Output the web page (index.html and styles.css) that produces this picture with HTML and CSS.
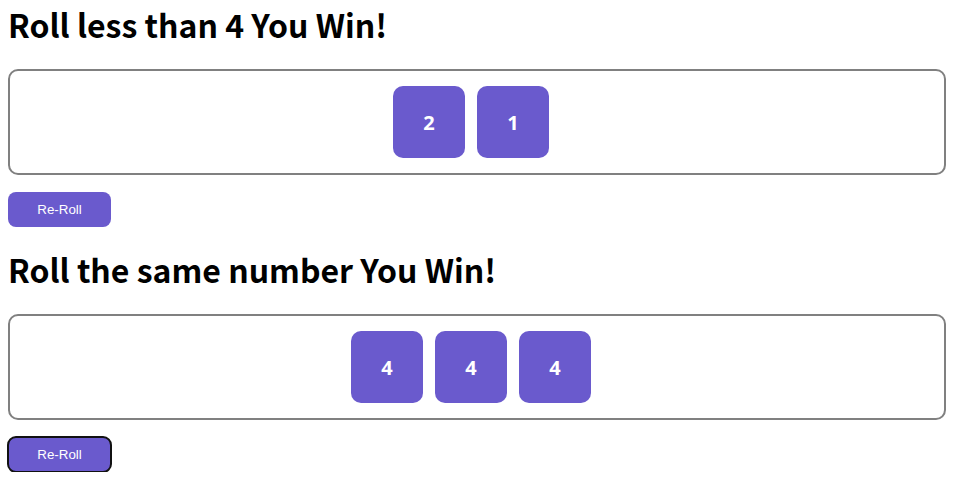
FILE: index.html
```html
<!DOCTYPE html>
<html>
<head>
<meta charset="utf-8">
<link rel="stylesheet" href="styles.css">
</head>
<body>
<section class="game">
  <h1 class="title">Roll less than 4 You Win!</h1>
  <div class="board">
    <div class="die">2</div>
    <div class="die">1</div>
  </div>
  <button class="reroll">Re-Roll</button>
</section>
<section class="game">
  <h1 class="title">Roll the same number You Win!</h1>
  <div class="board">
    <div class="die">4</div>
    <div class="die">4</div>
    <div class="die">4</div>
  </div>
  <button class="reroll focused">Re-Roll</button>
</section>
</body>
</html>
```
FILE: styles.css
```css
body {
  margin: 0;
  padding: 1px 8px 0;
  background: #fff;
  display: flex;
  flex-direction: column;
  gap: 19px;
}
.game {
  display: flex;
  flex-direction: column;
  align-items: flex-start;
}
.title {
  margin: 0 0 22px;
  font-family: "Noto Sans CJK KR", "Noto Sans", sans-serif;
  font-weight: 700;
  font-size: 32px;
  line-height: 46px;
  color: #000;
}
.board {
  align-self: stretch;
  display: flex;
  justify-content: center;
  padding: 15px 0;
  border: 2px solid #808080;
  border-radius: 10px;
}
.die {
  width: 72px;
  height: 72px;
  margin-right: 12px;
  border-radius: 10px;
  background: #6a5acd;
  color: #fff;
  display: flex;
  align-items: center;
  justify-content: center;
  font-family: "Noto Sans", sans-serif;
  font-weight: 700;
  font-size: 20px;
}
.reroll {
  margin-top: 17px;
  width: 103px;
  height: 35px;
  border: none;
  border-radius: 8px;
  background: #6a5acd;
  color: #fff;
  font-family: "Liberation Sans", Arial, sans-serif;
  font-size: 13.33px;
  padding: 0;
}
.focused {
  outline: 2px solid #111;
  outline-offset: -1px;
}
```
